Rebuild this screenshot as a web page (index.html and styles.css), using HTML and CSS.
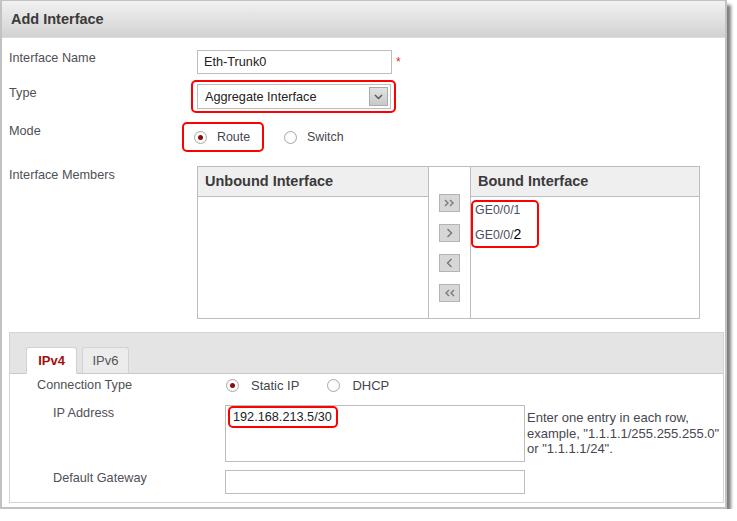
FILE: index.html
```html
<!DOCTYPE html>
<html>

<head>
    <meta charset="utf-8">
    <title>Add Interface</title>

    <link rel="stylesheet" href="styles.css">
</head>

<body>

    <div class="window">
        <div class="win_title">Add Interface</div>
        <div class="win_body">

            <div class="form_row">
                <div class="form_label">Interface Name</div>
                <div class="form_ctrl">
                    <input class="text_bar name_bar" type="text" value="Eth-Trunk0"><span class="required">*</span>
                </div>
            </div>

            <div class="form_row row_type">
                <div class="form_label">Type</div>
                <div class="form_ctrl">
                    <div class="mark mark_type">
                        <div class="select_box">
                            <span>Aggregate Interface</span>
                            <span class="select_arrow">
                                <svg width="9" height="6" viewBox="0 0 9 6"><polyline points="1,1 4.5,4.5 8,1" fill="none" stroke="#555" stroke-width="1.4"/></svg>
                            </span>
                        </div>
                    </div>
                </div>
            </div>

            <div class="form_row row_mode">
                <div class="form_label">Mode</div>
                <div class="form_ctrl radio_line">
                    <div class="mark mark_mode">
                        <span class="radio on"></span><span class="radio_text">Route</span>
                    </div>
                    <span class="radio switch_radio"></span><span class="radio_text">Switch</span>
                </div>
            </div>

            <div class="form_row row_members">
                <div class="form_label">Interface Members</div>
                <div class="transfer">
                    <div class="t_panel t_left">
                        <div class="t_head">Unbound Interface</div>
                    </div>
                    <div class="t_mid">
                        <div class="t_btn">
                            <svg width="11" height="8" viewBox="0 0 11 8"><polyline points="1,1 4,4 1,7" fill="none" stroke="#7a7a7a" stroke-width="1.4"/><polyline points="6,1 9,4 6,7" fill="none" stroke="#7a7a7a" stroke-width="1.4"/></svg>
                        </div>
                        <div class="t_btn">
                            <svg width="7" height="10" viewBox="0 0 7 10"><polyline points="1.5,1 5.5,5 1.5,9" fill="none" stroke="#7a7a7a" stroke-width="1.5"/></svg>
                        </div>
                        <div class="t_btn">
                            <svg width="7" height="10" viewBox="0 0 7 10"><polyline points="5.5,1 1.5,5 5.5,9" fill="none" stroke="#7a7a7a" stroke-width="1.5"/></svg>
                        </div>
                        <div class="t_btn">
                            <svg width="11" height="8" viewBox="0 0 11 8"><polyline points="5,1 2,4 5,7" fill="none" stroke="#7a7a7a" stroke-width="1.4"/><polyline points="10,1 7,4 10,7" fill="none" stroke="#7a7a7a" stroke-width="1.4"/></svg>
                        </div>
                    </div>
                    <div class="t_panel t_right">
                        <div class="t_head">Bound Interface</div>
                        <div class="mark mark_bound">
                            <div class="t_item">GE0/0/1</div>
                            <div class="t_item">GE0/0/<span class="edit_digit">2</span></div>
                        </div>
                    </div>
                </div>
            </div>

            <div class="ip_panel">
                <div class="tab_band">
                    <div class="tab tab_active">IPv4</div>
                    <div class="tab">IPv6</div>
                </div>
                <div class="ip_body">
                    <div class="form_row">
                        <div class="form_label">Connection Type</div>
                        <div class="form_ctrl radio_line conn_line">
                            <span class="radio on static_radio"></span><span class="radio_text conn_text">Static IP</span>
                            <span class="radio dhcp_radio"></span><span class="radio_text conn_text">DHCP</span>
                        </div>
                    </div>
                    <div class="form_row row_ip">
                        <div class="form_label sub_label">IP Address</div>
                        <div class="text_area">
                            <div class="mark mark_ip">192.168.213.5/30</div>
                        </div>
                        <div class="help_text">Enter one entry in each row,<br>example, "1.1.1.1/255.255.255.0"<br>or "1.1.1.1/24".</div>
                    </div>
                    <div class="form_row row_gateway">
                        <div class="form_label sub_label">Default Gateway</div>
                        <input class="text_bar gateway_bar" type="text">
                    </div>
                </div>
            </div>

        </div>
    </div>

</body>

</html>
```

FILE: styles.css
```css
* {
    box-sizing: border-box;
}

body {
    margin: 0;
    background-color: #ffffff;
    font-family: "Liberation Sans", Arial, sans-serif;
    font-size: 12.7px;
    color: #505058;
}

.window {
    width: 727px;
    border: 2px solid #c2c2c2;
    border-top-width: 1px;
    background-color: #ffffff;
    box-shadow: 4px 5px 3px rgba(0, 0, 0, 0.5);
}

.win_title {
    height: 37px;
    line-height: 37px;
    padding-left: 9px;
    border-bottom: 1px solid #dcdcdc;
    background: linear-gradient(#f1f1f1, #d2d2d2);
    font-size: 14.5px;
    font-weight: bold;
    color: #3a3a3a;
}

.win_body {
    padding: 12px 0 4px 7px;
}

.form_row {
    display: flex;
}

.form_label {
    width: 188px;
    flex: none;
    line-height: 16px;
}

.form_ctrl {
    display: flex;
    align-items: center;
}

.text_bar {
    height: 24px;
    border: 1px solid #bdbdbd;
    padding: 0 6px;
    font: inherit;
    color: #222222;
    outline: none;
    margin: 0;
}

.name_bar {
    width: 195px;
}

.required {
    color: #e8202a;
    margin-left: 4px;
    font-size: 12px;
}

.mark {
    border: 2px solid #ff0000;
    border-radius: 5px;
}

/* type */
.row_type {
    margin-top: 6px;
}

.row_type .form_label {
    padding-top: 5px;
}

.mark_type {
    margin-left: -6px;
    padding: 2px 3px 2px 4px;
}

.select_box {
    width: 194px;
    height: 25px;
    border: 1px solid #bdbdbd;
    display: flex;
    align-items: center;
    padding-left: 7px;
    color: #222222;
}

.select_arrow {
    margin-left: auto;
    margin-right: 2px;
    width: 19px;
    height: 19px;
    border: 1px solid #ababab;
    background: linear-gradient(#e2e2e2, #c9c9c9);
    display: flex;
    align-items: center;
    justify-content: center;
}

/* radios */
.radio {
    width: 13px;
    height: 13px;
    flex: none;
    border: 1px solid #a9a9a9;
    border-radius: 50%;
    background: radial-gradient(circle, #ffffff 50%, #ececec);
    display: inline-flex;
    align-items: center;
    justify-content: center;
}

.radio.on::after {
    content: "";
    width: 5px;
    height: 5px;
    border-radius: 50%;
    background-color: #8c0b0b;
}

.radio_text {
    margin-left: 10px;
    color: #454550;
    font-size: 12.4px;
}

.row_mode {
    margin-top: 9px;
}

.row_mode .form_label {
    padding-top: 1px;
}

.mark_mode {
    margin-left: -15px;
    height: 30px;
    padding: 0 12px 0 10px;
    display: flex;
    align-items: center;
}

.switch_radio {
    margin-left: 20px;
}

/* members */
.row_members {
    margin-top: 14px;
}

.row_members .form_label {
    padding-top: 1px;
}

.transfer {
    width: 503px;
    height: 153px;
    border: 1px solid #bcbcc4;
    display: flex;
}

.t_left {
    width: 231px;
    border-right: 1px solid #bcbcc4;
}

.t_right {
    flex: 1;
}

.t_head {
    height: 30px;
    line-height: 29px;
    padding-left: 7px;
    border-bottom: 1px solid #bcbcc4;
    background-color: #efefef;
    font-size: 14.5px;
    font-weight: bold;
    color: #3a3a3a;
}

.t_mid {
    width: 42px;
    border-right: 1px solid #bcbcc4;
    padding-top: 27px;
    display: flex;
    flex-direction: column;
    align-items: center;
    gap: 12px;
}

.t_btn {
    width: 21px;
    height: 18px;
    border: 1px solid #b4b4b4;
    background-color: #d7d7d7;
    display: flex;
    align-items: center;
    justify-content: center;
}

.mark_bound {
    width: 68px;
    margin-top: 3px;
    padding: 0 0 3px 2px;
}

.t_item {
    line-height: 16px;
    margin-bottom: 8px;
    color: #4a5060;
    font-size: 12.4px;
}

.t_item:last-child {
    margin-bottom: 0;
}

.edit_digit {
    color: #000000;
    font-size: 14px;
}

/* ip panel */
.ip_panel {
    width: 715px;
    margin-top: 13px;
    border: 1px solid #d4d4d4;
}

.tab_band {
    height: 41px;
    background-color: #e4e4e4;
    border-bottom: 1px solid #c9c9c9;
    display: flex;
    align-items: flex-end;
    padding-left: 16px;
}

.tab {
    width: 47px;
    height: 27px;
    margin-left: 5px;
    margin-bottom: -1px;
    border: 1px solid #d2d2d2;
    border-bottom: 1px solid #c9c9c9;
    border-radius: 3px 3px 0 0;
    background-color: #ececec;
    text-align: center;
    line-height: 25px;
    font-size: 13px;
    color: #555555;
}

.tab_active {
    width: 51px;
    margin-left: 0;
    border-bottom-color: #ffffff;
    background-color: #ffffff;
    color: #a30d0d;
    font-weight: bold;
}

.ip_body {
    padding: 3px 0 8px 27px;
}

.conn_line {
    height: 16px;
}

.static_radio {
    margin-left: 1px;
}

.conn_text {
    margin-left: 12px;
    font-size: 13px;
}

.dhcp_radio {
    margin-left: 28px;
}

.sub_label {
    padding-left: 16px;
}

.row_ip {
    margin-top: 12px;
}

.text_area {
    width: 300px;
    height: 57px;
    border: 1px solid #bdbdbd;
    padding-left: 2px;
}

.mark_ip {
    width: 110px;
    height: 22px;
    line-height: 18px;
    padding-left: 3px;
    color: #222222;
}

.help_text {
    margin-left: 2px;
    padding-top: 5px;
    line-height: 15.5px;
    font-size: 13px;
    color: #464650;
}

.row_gateway {
    margin-top: 8px;
}

.gateway_bar {
    width: 300px;
}
```
